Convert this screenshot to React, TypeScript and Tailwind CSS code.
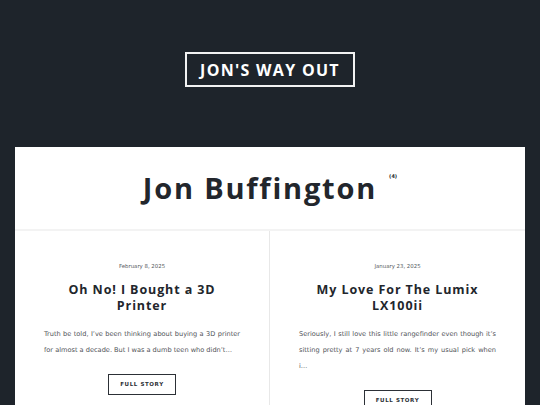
/**
 * Blog landing: dark backdrop, boxed site title, white author card with two post teasers.
 */

const posts = [
  {
    date: 'February 8, 2025',
    title: 'Oh No! I Bought a 3D Printer',
    excerpt:
      "Truth be told, I\u2019ve been thinking about buying a 3D printer for almost a decade. But I was a dumb teen who didn\u2019t\u2026",
  },
  {
    date: 'January 23, 2025',
    title: 'My Love For The Lumix LX100ii',
    excerpt:
      "Seriously, I still love this little rangefinder even though it\u2019s sitting pretty at 7 years old now. It\u2019s my usual pick when i\u2026",
  },
];

const heading = { fontFamily: '"Open Sans", "DejaVu Sans", sans-serif' };
const body = { fontFamily: '"DejaVu Sans", Verdana, sans-serif' };

const PostTeaser = ({ date, title, excerpt }: (typeof posts)[number]) => (
  <article className="flex flex-col items-center px-[29px] pt-[31px] text-center">
    {/* Date */}
    <p className="text-[5.4px] leading-[8px] text-[#555a60]" style={body}>
      {date}
    </p>

    {/* Title */}
    <h2
      className="mt-[12px] text-[12.5px] font-bold leading-[16px] tracking-[0.9px] text-[#22262c]"
      style={heading}
    >
      {title}
    </h2>

    {/* Excerpt */}
    <p
      className="mt-[12px] w-full text-justify text-[6.6px] leading-[16px] text-[#505358] [text-align-last:left]"
      style={body}
    >
      {excerpt}
    </p>

    {/* Button */}
    <button
      className="mt-[16px] h-[21px] w-[68px] border border-[#2c3036] text-[5.5px] font-bold tracking-[0.6px] text-[#2c3036]"
      style={body}
    >
      FULL STORY
    </button>
  </article>
);

export default function App() {
  return (
    <div className="min-h-[405px] bg-[#1e242b] pt-[52px]">
      {/* Site title */}
      <div className="flex justify-center">
        <div
          className="flex h-[35px] w-[170px] items-center justify-center border-2 border-[#f2f2f2] text-[16px] font-bold tracking-[1.3px] text-white"
          style={heading}
        >
          JON'S WAY OUT
        </div>
      </div>

      {/* Author card */}
      <div className="mx-[15px] mt-[60px] bg-white">
        <div className="flex h-[82px] items-center justify-center">
          <h1
            className="flex items-start text-[29px] font-bold tracking-[1.8px] text-[#22262c]"
            style={heading}
          >
            <span>Jon Buffington</span>
            <sup
              className="ml-[12px] mt-[12px] text-[5px] font-bold tracking-normal"
              style={body}
            >
              (4)
            </sup>
          </h1>
        </div>
        <div className="h-[2px] bg-[#f3f3f3]" />

        {/* Posts */}
        <div className="grid grid-cols-2">
          <div className="border-r border-[#e8e8e8] pb-[20px]">
            <PostTeaser {...posts[0]} />
          </div>
          <div className="pb-[20px]">
            <PostTeaser {...posts[1]} />
          </div>
        </div>
      </div>
    </div>
  );
}
